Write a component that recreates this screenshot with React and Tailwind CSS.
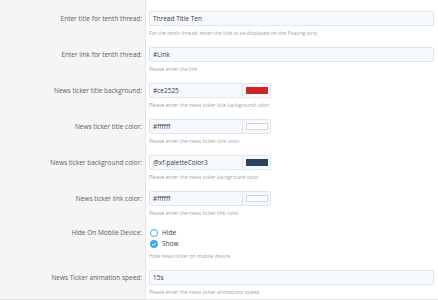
import React from "react";

const font = { fontFamily: '"Open Sans", "Noto Sans", sans-serif' };

const Label = ({ children }) => (
  <div className="text-right text-[6.5px] text-[#5c5c5c] pr-[3px] leading-[15px]">{children}</div>
);

const Hint = ({ children }) => (
  <div className="mt-[3px] h-[8px] leading-[8px] text-[5.1px] text-[#a3a3a3] whitespace-nowrap">{children}</div>
);

const TextRow = ({ label, value, hint }) => (
  <>
    <div className="pt-[10px] bg-[#f5f5f5] border-r border-[#e4e4e4]">
      <Label>{label}</Label>
    </div>
    <div className="pt-[10px] pl-[3px] pr-[4px]">
      <div className="h-[15px] rounded-[2px] border border-[#dfe6ee] bg-[#f5f9fd] px-[3px] leading-[13px] text-[6.5px] text-[#3a3a3a]">
        {value}
      </div>
      <Hint>{hint}</Hint>
    </div>
  </>
);

const ColorRow = ({ label, value, swatch, hint }) => (
  <>
    <div className="pt-[10px] bg-[#f5f5f5] border-r border-[#e4e4e4]">
      <Label>{label}</Label>
    </div>
    <div className="pt-[10px] pl-[3px]">
      <div className="flex h-[15px] w-[122px]">
        <div className="w-[94px] rounded-l-[2px] border border-[#dfe6ee] bg-[#f5f9fd] px-[3px] leading-[13px] text-[6.5px] text-[#3a3a3a]">
          {value}
        </div>
        <div className="flex-1 flex items-center justify-center rounded-r-[2px] border border-l-0 border-[#dfe6ee] bg-[#f7fafd]">
          <div className={`w-[22px] h-[7px] ${swatch}`} />
        </div>
      </div>
      <Hint>{hint}</Hint>
    </div>
  </>
);

export default function App() {
  return (
    <div className="w-[438px] h-[300px] bg-white overflow-hidden" style={font}>
      <div className="grid grid-cols-[146px_1fr] border-b border-[#e0e0e0]">
        <div className="h-[1px] bg-[#f5f5f5] border-r border-[#e4e4e4]" />
        <div className="h-[1px]" />
        <TextRow
          label="Enter title for tenth thread:"
          value="Thread Title Ten"
          hint="For the tenth thread, enter the title to be displayed on the floating strip"
        />
        <TextRow label="Enter link for tenth thread:" value="#Link" hint="Please enter the link" />
        <ColorRow
          label="News ticker title background:"
          value="#ce2525"
          swatch="bg-[#ce2525]"
          hint="Please enter the news ticker title background color"
        />
        <ColorRow
          label="News ticker title color:"
          value="#ffffff"
          swatch="bg-white border border-[#d0d6dd]"
          hint="Please enter the news ticker title color"
        />
        <ColorRow
          label="News ticker background color:"
          value="@xf-paletteColor3"
          swatch="bg-[#2d4259]"
          hint="Please enter the news ticker background color"
        />
        <ColorRow
          label="News ticker link color:"
          value="#ffffff"
          swatch="bg-white border border-[#d0d6dd]"
          hint="Please enter the news ticker link color"
        />
        <div className="pt-[10px] bg-[#f5f5f5] border-r border-[#e4e4e4]">
          <div className="text-right text-[6.5px] text-[#5c5c5c] pr-[3px] leading-[11px]">Hide On Mobile Device:</div>
        </div>
        <div className="pt-[10px] pl-[4px]">
          <div className="flex items-center gap-[4px] h-[11px] text-[6.5px] text-[#3a3a3a]">
            <span className="w-[8px] h-[8px] rounded-full border border-[#47a7eb] bg-white" />
            Hide
          </div>
          <div className="flex items-center gap-[4px] h-[11px] text-[6.5px] text-[#3a3a3a]">
            <span className="w-[8px] h-[8px] rounded-full bg-[#47a7eb] flex items-center justify-center">
              <svg viewBox="0 0 8 8" className="w-[6px] h-[6px]">
                <path d="M1.5 4.2 L3.2 5.8 L6.5 2.4" fill="none" stroke="white" strokeWidth="1.3" />
              </svg>
            </span>
            Show
          </div>
          <div className="-ml-[1px]">
            <Hint>Hide news ticker on mobile device.</Hint>
          </div>
        </div>
        <TextRow label="News Ticker animation speed:" value="15s" hint="Please enter the news ticker animations speed" />
        <div className="h-[3px] bg-[#f5f5f5] border-r border-[#e4e4e4]" />
        <div className="h-[3px]" />
      </div>
    </div>
  );
}
